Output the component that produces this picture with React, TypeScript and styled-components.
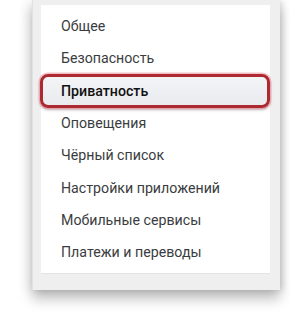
import styled, { createGlobalStyle } from 'styled-components';

const GlobalStyle = createGlobalStyle`
  html, body {
    margin: 0;
    padding: 0;
    background: #ffffff;
  }
  body {
    font-family: Roboto, 'Open Sans', 'Liberation Sans', sans-serif;
  }
`;

const Page = styled.div`
  width: 290px;
  height: 320px;
  padding-left: 32px;
  box-sizing: border-box;
  overflow: hidden;
`;

const Panel = styled.div`
  width: 248px;
  height: 290px;
  box-sizing: border-box;
  padding: 5px 10px 0 8px;
  background: #efefef;
  border-left: 1px solid #e2e2e2;
  box-shadow: 0px 9px 12px rgba(0, 0, 0, 0.25), 3px 0px 6px rgba(0, 0, 0, 0.12),
    -6px 0px 10px rgba(0, 0, 0, 0.05);
`;

const Card = styled.ul`
  list-style: none;
  margin: 0;
  padding: 5px 0 6px;
  height: 268px;
  box-sizing: border-box;
  background: #ffffff;
  box-shadow: 0 1px 0 #e3e3e3;
`;

const Item = styled.li<{ active?: boolean }>`
  display: flex;
  align-items: center;
  height: 32.3px;
  padding-left: 20px;
  box-sizing: border-box;
  font-size: 14.2px;
  color: #3a3c40;
  font-weight: ${({ active }) => (active ? 500 : 400)};
  ${({ active }) =>
    active &&
    `
    margin: 0 0 0 -1px;
    padding-left: 18px;
    border: 3px solid #ad2a33;
    border-radius: 8px;
    background: linear-gradient(180deg, #f3f4f6 0%, #e9ebef 100%);
    box-shadow: 0 0 0 1.5px rgba(231, 140, 150, 0.55), 0 2px 3px rgba(0, 0, 0, 0.25);
    color: #111111;
    height: 34px;
    margin-top: -0.8px;
    margin-bottom: -0.8px;
  `}
`;

const items = [
  'Общее',
  'Безопасность',
  'Приватность',
  'Оповещения',
  'Чёрный список',
  'Настройки приложений',
  'Мобильные сервисы',
  'Платежи и переводы',
];

export default function App() {
  return (
    <>
      <GlobalStyle />
      <Page>
        <Panel>
          <Card>
            {items.map((label) => (
              <Item key={label} active={label === 'Приватность'}>
                {label}
              </Item>
            ))}
          </Card>
        </Panel>
      </Page>
    </>
  );
}
